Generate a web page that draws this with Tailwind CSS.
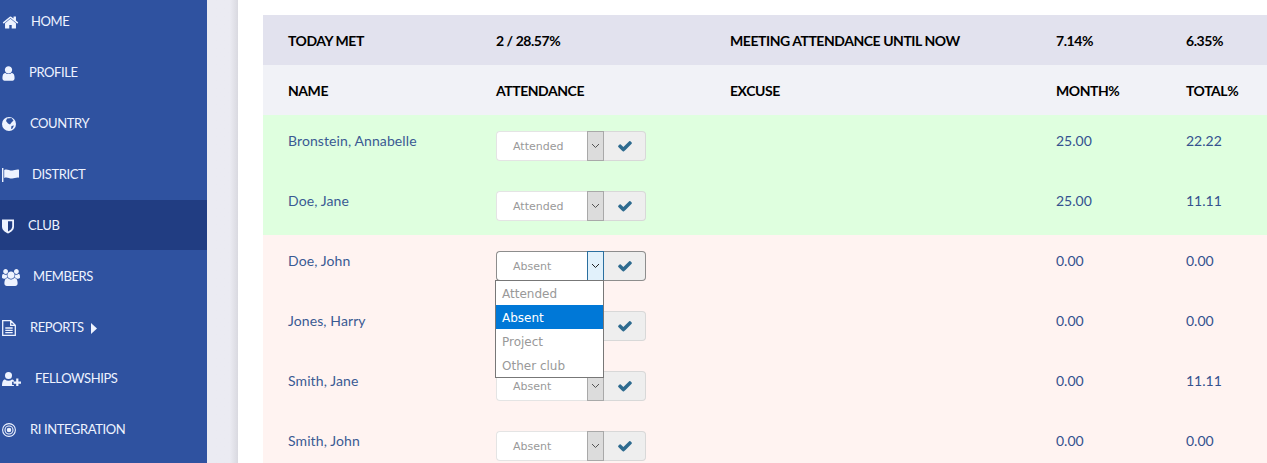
<!DOCTYPE html>
<html lang="en">
  <head>
    <meta charset="UTF-8" />
    <title>Club attendance</title>
    <script src="https://cdn.jsdelivr.net/npm/@tailwindcss/browser@4"></script>
  </head>
  <body class="h-[463px] w-[1267px] overflow-hidden flex bg-white font-['Lato','Liberation_Sans',sans-serif]">
    <!-- Sidebar -->
    <nav class="w-[207px] h-[463px] shrink-0 bg-[#2f52a0] text-[#eef3ff] text-[13px] tracking-[-0.4px] overflow-hidden">
      <ul class="flex flex-col gap-px -mt-[4px]">
        <li class="h-[50px] flex items-center pl-[2px] pt-[2px]">
          <svg class="w-[17px] h-[17px] fill-[#eef3ff]" viewBox="0 0 1792 1792"><path d="M1472 992v480q0 26-19 45t-45 19h-384v-384h-256v384h-384q-26 0-45-19t-19-45v-480q0-1 .5-3t.5-3l575-474 575 474q1 2 1 6zm223-69l-62 74q-8 9-21 11h-3q-13 0-21-7l-692-577-692 577q-12 8-24 7-13-2-21-11l-62-74q-8-10-7-23.5t11-21.5l719-599q32-26 76-26t76 26l244 204v-195q0-14 9-23t23-9h192q14 0 23 9t9 23v408l219 182q10 8 11 21.5t-7 23.5z"/></svg>
          <span class="ml-[12px]">HOME</span>
        </li>
        <li class="h-[50px] flex items-center pl-[0px] pt-[2px]">
          <svg class="w-[17px] h-[17px] fill-[#eef3ff]" viewBox="0 0 1792 1792"><path d="M1536 1399q0 109-62.5 187t-150.5 78h-854q-88 0-150.5-78t-62.5-187q0-85 8.5-160.5t31.5-152 58.5-131 94-89 134.5-34.5q131 128 313 128t313-128q76 0 134.5 34.5t94 89 58.5 131 31.5 152 8.5 160.5zm-256-887q0 159-112.5 271.5t-271.5 112.5-271.5-112.5-112.5-271.5 112.5-271.5 271.5-112.5 271.5 112.5 112.5 271.5z"/></svg>
          <span class="ml-[12px]">PROFILE</span>
        </li>
        <li class="h-[50px] flex items-center pl-[2px] pt-[2px]">
          <svg class="w-[14px] h-[14px]" viewBox="0 0 14 14"><circle cx="7" cy="7" r="7" fill="#eef3ff"/><path d="M5 1.500 9.500 1l2 2.500-2 2-1.500 2-2-1-2-2.500zM9.500 9l2.500-.5-1.500 3L9 12z" fill="#2f52a0"/></svg>
          <span class="ml-[14px]">COUNTRY</span>
        </li>
        <li class="h-[50px] flex items-center pl-[2px] pt-[2px]">
          <svg class="w-[17px] h-[14px] fill-[#eef3ff]" viewBox="0 0 17 14"><path d="M0 0h1.400v14H0zM2.200 2c3-1.500 5 .8 8 .6 2-.1 4-1.400 6.800-.9v8c-2.800-.4-4.800.8-6.800.9-3 .2-5-1.900-8-.6z"/></svg>
          <span class="ml-[13px]">DISTRICT</span>
        </li>
        <li class="h-[50px] flex items-center pl-[2px] pt-[2px] bg-[#213d82]">
          <svg class="w-[12px] h-[15px]" viewBox="0 0 12 14"><path d="M0 0h12v7c0 3.500-3 5.700-6 7-3-1.300-6-3.500-6-7z" fill="#eef3ff"/><path d="M6 1.800h4.200V7c0 2.300-2 3.900-4.200 5z" fill="#213d82"/></svg>
          <span class="ml-[14px]">CLUB</span>
        </li>
        <li class="h-[50px] flex items-center pl-[2px] pt-[2px]">
          <svg class="w-[18px] h-[17px] fill-[#eef3ff]" viewBox="0 0 1920 1792"><path d="M593 896q-162 5-265 128h-134q-82 0-138-40.500t-56-118.500q0-353 124-353 6 0 43.500 21t97.500 42.500 119 21.500q67 0 133-23-5 37-5 66 0 139 81 256zm1071 637q0 120-73 189.500t-194 69.500h-874q-121 0-194-69.500t-73-189.500q0-53 3.500-103.500t14-109 26.500-108.500 43-97.500 62-81 85.500-53.500 111.500-20q10 0 43 21.500t73 48 107 48 135 21.500 135-21.500 107-48 73-48 43-21.500q61 0 111.500 20t85.500 53.500 62 81 43 97.500 26.500 108.500 14 109 3.500 103.500zm-1024-1277q0 106-75 181t-181 75-181-75-75-181 75-181 181-75 181 75 75 181zm704 384q0 159-112.500 271.500t-271.500 112.500-271.500-112.500-112.500-271.500 112.500-271.500 271.500-112.500 271.500 112.500 112.500 271.500zm576 225q0 78-56 118.500t-138 40.500h-134q-103-123-265-128 81-117 81-256 0-29-5-66 66 23 133 23 59 0 119-21.500t97.500-42.500 43.500-21q124 0 124 353zm-128-609q0 106-75 181t-181 75-181-75-75-181 75-181 181-75 181 75 75 181z"/></svg>
          <span class="ml-[13px]">MEMBERS</span>
        </li>
        <li class="h-[50px] flex items-center pl-[2px] pt-[2px]">
          <svg class="w-[14px] h-[16px] fill-none stroke-[#eef3ff]" viewBox="0 0 14 16" stroke-width="1.300"><path d="M.7.700h8l4.600 4.600v10H.7zM8.700.700v4.600h4.600M3.300 8h7.400M3.300 10.300h7.400M3.300 12.600h7.400"/></svg>
          <span class="ml-[14px]">REPORTS</span>
          <svg class="w-[6px] h-[11px] ml-[7px] fill-[#eef3ff]" viewBox="0 0 6 11"><path d="M0 0l6 5.500L0 11z"/></svg>
        </li>
        <li class="h-[50px] flex items-center pl-[2px] pt-[2px]">
          <svg class="w-[19px] h-[14px] fill-[#eef3ff]" viewBox="0 0 19 14"><circle cx="6.500" cy="3.500" r="3.500"/><path d="M0 14c0-4 1-6.500 3-6.500 1 .8 2.200 1.200 3.500 1.200s2.500-.4 3.500-1.200c.8 0 1.400.4 1.900 1v1.300h-1.800v3.100h1.800V14z"/><path d="M14.200 6.500h2.200v3h2.600v2.200h-2.600V14h-2.200v-2.300h-2.600V9.500h2.600z"/></svg>
          <span class="ml-[14px]">FELLOWSHIPS</span>
        </li>
        <li class="h-[50px] flex items-center pl-[2px] pt-[2px]">
          <svg class="w-[14px] h-[14px] fill-none stroke-[#eef3ff]" viewBox="0 0 14 14" stroke-width="1.100"><circle cx="7" cy="7" r="6.400"/><circle cx="7" cy="7" r="4"/><circle cx="7" cy="7" r="1.700" fill="#eef3ff"/></svg>
          <span class="ml-[14px]">RI INTEGRATION</span>
        </li>
      </ul>
    </nav>

    <!-- Gutter -->
    <div class="w-[31px] h-[463px] shrink-0 bg-gradient-to-r from-[#ebebf2] from-[74%] to-[#d9d9e0]"></div>

    <!-- Content -->
    <main class="flex-1 min-w-0 pl-[25px] pt-[15px] overflow-hidden">
      <div class="relative">
        <table class="table-fixed w-[1004px] text-[14px] text-left">
          <colgroup>
            <col class="w-[233px]" />
            <col class="w-[234px]" />
            <col class="w-[326px]" />
            <col class="w-[130px]" />
            <col class="w-[81px]" />
          </colgroup>
          <thead class="text-black font-bold tracking-[-0.45px]">
            <tr class="h-[50px] bg-[#e2e2ee]">
              <th class="pl-[25px] font-bold">TODAY MET</th>
              <th class="font-bold">2 / 28.57%</th>
              <th class="font-bold">MEETING ATTENDANCE UNTIL NOW</th>
              <th class="font-bold">7.14%</th>
              <th class="font-bold">6.35%</th>
            </tr>
            <tr class="h-[50px] bg-[#f1f2f7]">
              <th class="pl-[25px] font-bold">NAME</th>
              <th class="font-bold">ATTENDANCE</th>
              <th class="font-bold">EXCUSE</th>
              <th class="font-bold">MONTH%</th>
              <th class="font-bold">TOTAL%</th>
            </tr>
          </thead>
          <tbody class="text-[#34518f]">
            <tr class="h-[60px] bg-[#dfffdf]">
              <td class="pl-[25px] pt-[15px] align-top text-[#3a5a93] tracking-[0.1px]">Bronstein, Annabelle</td>
              <td class="pt-[16px] align-top">
                <div class="flex w-[150px] h-[30px]">
                  <div class="flex-1 bg-white rounded-l-[4px] border border-[#e4e4e4] border-r-0 pl-[16px] pt-[3px] flex items-center text-[11px] text-[#999] font-['DejaVu_Sans',sans-serif]">Attended</div>
                  <div class="w-[17px] bg-[#dcdcdc] border border-[#a9a9a9] flex items-center justify-center"><svg class="w-[9px] h-[6px] fill-none stroke-[#555]" viewBox="0 0 9 6"><path d="M1 1l3.500 3.500L8 1"/></svg></div>
                  <div class="w-[42px] bg-[#eeeeee] rounded-r-[4px] border border-[#d8d8d8] border-l-0 flex items-center justify-center"><svg class="w-[16px] h-[16px] fill-[#2e6b8f]" viewBox="0 0 1792 1792"><path d="M1671 566q0 40-28 68l-724 724-136 136q-28 28-68 28t-68-28l-136-136-362-362q-28-28-28-68t28-68l136-136q28-28 68-28t68 28l294 295 656-657q28-28 68-28t68 28l136 136q28 28 28 68z"/></svg></div>
                </div>
              </td>
              <td></td>
              <td class="pt-[15px] align-top">25.00</td>
              <td class="pt-[15px] align-top">22.22</td>
            </tr>
            <tr class="h-[60px] bg-[#dfffdf]">
              <td class="pl-[25px] pt-[15px] align-top text-[#3a5a93] tracking-[0.1px]">Doe, Jane</td>
              <td class="pt-[16px] align-top">
                <div class="flex w-[150px] h-[30px]">
                  <div class="flex-1 bg-white rounded-l-[4px] border border-[#e4e4e4] border-r-0 pl-[16px] pt-[3px] flex items-center text-[11px] text-[#999] font-['DejaVu_Sans',sans-serif]">Attended</div>
                  <div class="w-[17px] bg-[#dcdcdc] border border-[#a9a9a9] flex items-center justify-center"><svg class="w-[9px] h-[6px] fill-none stroke-[#555]" viewBox="0 0 9 6"><path d="M1 1l3.500 3.500L8 1"/></svg></div>
                  <div class="w-[42px] bg-[#eeeeee] rounded-r-[4px] border border-[#d8d8d8] border-l-0 flex items-center justify-center"><svg class="w-[16px] h-[16px] fill-[#2e6b8f]" viewBox="0 0 1792 1792"><path d="M1671 566q0 40-28 68l-724 724-136 136q-28 28-68 28t-68-28l-136-136-362-362q-28-28-28-68t28-68l136-136q28-28 68-28t68 28l294 295 656-657q28-28 68-28t68 28l136 136q28 28 28 68z"/></svg></div>
                </div>
              </td>
              <td></td>
              <td class="pt-[15px] align-top">25.00</td>
              <td class="pt-[15px] align-top">11.11</td>
            </tr>
            <tr class="h-[60px] bg-[#fff3f1]">
              <td class="pl-[25px] pt-[15px] align-top text-[#3a5a93] tracking-[0.1px]">Doe, John</td>
              <td class="pt-[16px] align-top">
                <div class="flex w-[150px] h-[30px]">
                  <div class="flex-1 bg-white rounded-l-[4px] border border-[#8d8d8d] border-r-0 pl-[16px] pt-[3px] flex items-center text-[11px] text-[#999] font-['DejaVu_Sans',sans-serif]">Absent</div>
                  <div class="w-[17px] bg-[#e1f1fb] border border-[#2a6f9f] flex items-center justify-center"><svg class="w-[9px] h-[6px] fill-none stroke-[#222]" viewBox="0 0 9 6"><path d="M1 1l3.500 3.500L8 1"/></svg></div>
                  <div class="w-[42px] bg-[#eeeeee] rounded-r-[4px] border border-[#8d8d8d] border-l-0 flex items-center justify-center"><svg class="w-[16px] h-[16px] fill-[#2e6b8f]" viewBox="0 0 1792 1792"><path d="M1671 566q0 40-28 68l-724 724-136 136q-28 28-68 28t-68-28l-136-136-362-362q-28-28-28-68t28-68l136-136q28-28 68-28t68 28l294 295 656-657q28-28 68-28t68 28l136 136q28 28 28 68z"/></svg></div>
                </div>
              </td>
              <td></td>
              <td class="pt-[15px] align-top">0.00</td>
              <td class="pt-[15px] align-top">0.00</td>
            </tr>
            <tr class="h-[60px] bg-[#fff3f1]">
              <td class="pl-[25px] pt-[15px] align-top text-[#3a5a93] tracking-[0.1px]">Jones, Harry</td>
              <td class="pt-[16px] align-top">
                <div class="flex w-[150px] h-[30px]">
                  <div class="flex-1 bg-white rounded-l-[4px] border border-[#e4e4e4] border-r-0"></div>
                  <div class="w-[17px] bg-[#dcdcdc] border border-[#a9a9a9] flex items-center justify-center"><svg class="w-[9px] h-[6px] fill-none stroke-[#555]" viewBox="0 0 9 6"><path d="M1 1l3.500 3.500L8 1"/></svg></div>
                  <div class="w-[42px] bg-[#eeeeee] rounded-r-[4px] border border-[#d8d8d8] border-l-0 flex items-center justify-center"><svg class="w-[16px] h-[16px] fill-[#2e6b8f]" viewBox="0 0 1792 1792"><path d="M1671 566q0 40-28 68l-724 724-136 136q-28 28-68 28t-68-28l-136-136-362-362q-28-28-28-68t28-68l136-136q28-28 68-28t68 28l294 295 656-657q28-28 68-28t68 28l136 136q28 28 28 68z"/></svg></div>
                </div>
              </td>
              <td></td>
              <td class="pt-[15px] align-top">0.00</td>
              <td class="pt-[15px] align-top">0.00</td>
            </tr>
            <tr class="h-[60px] bg-[#fff3f1]">
              <td class="pl-[25px] pt-[15px] align-top text-[#3a5a93] tracking-[0.1px]">Smith, Jane</td>
              <td class="pt-[16px] align-top">
                <div class="flex w-[150px] h-[30px]">
                  <div class="flex-1 bg-white rounded-l-[4px] border border-[#e4e4e4] border-r-0 pl-[16px] pt-[3px] flex items-center text-[11px] text-[#999] font-['DejaVu_Sans',sans-serif]">Absent</div>
                  <div class="w-[17px] bg-[#dcdcdc] border border-[#a9a9a9] flex items-center justify-center"><svg class="w-[9px] h-[6px] fill-none stroke-[#555]" viewBox="0 0 9 6"><path d="M1 1l3.500 3.500L8 1"/></svg></div>
                  <div class="w-[42px] bg-[#eeeeee] rounded-r-[4px] border border-[#d8d8d8] border-l-0 flex items-center justify-center"><svg class="w-[16px] h-[16px] fill-[#2e6b8f]" viewBox="0 0 1792 1792"><path d="M1671 566q0 40-28 68l-724 724-136 136q-28 28-68 28t-68-28l-136-136-362-362q-28-28-28-68t28-68l136-136q28-28 68-28t68 28l294 295 656-657q28-28 68-28t68 28l136 136q28 28 28 68z"/></svg></div>
                </div>
              </td>
              <td></td>
              <td class="pt-[15px] align-top">0.00</td>
              <td class="pt-[15px] align-top">11.11</td>
            </tr>
            <tr class="h-[60px] bg-[#fff3f1]">
              <td class="pl-[25px] pt-[15px] align-top text-[#3a5a93] tracking-[0.1px]">Smith, John</td>
              <td class="pt-[16px] align-top">
                <div class="flex w-[150px] h-[30px]">
                  <div class="flex-1 bg-white rounded-l-[4px] border border-[#e4e4e4] border-r-0 pl-[16px] pt-[3px] flex items-center text-[11px] text-[#999] font-['DejaVu_Sans',sans-serif]">Absent</div>
                  <div class="w-[17px] bg-[#dcdcdc] border border-[#a9a9a9] flex items-center justify-center"><svg class="w-[9px] h-[6px] fill-none stroke-[#555]" viewBox="0 0 9 6"><path d="M1 1l3.500 3.500L8 1"/></svg></div>
                  <div class="w-[42px] bg-[#eeeeee] rounded-r-[4px] border border-[#d8d8d8] border-l-0 flex items-center justify-center"><svg class="w-[16px] h-[16px] fill-[#2e6b8f]" viewBox="0 0 1792 1792"><path d="M1671 566q0 40-28 68l-724 724-136 136q-28 28-68 28t-68-28l-136-136-362-362q-28-28-28-68t28-68l136-136q28-28 68-28t68 28l294 295 656-657q28-28 68-28t68 28l136 136q28 28 28 68z"/></svg></div>
                </div>
              </td>
              <td></td>
              <td class="pt-[15px] align-top">0.00</td>
              <td class="pt-[15px] align-top">0.00</td>
            </tr>
          </tbody>
        </table>

        <!-- Open select dropdown -->
        <ul class="absolute left-[232px] top-[265px] w-[109px] bg-white border border-[#777] text-[12px] text-[#999] font-['DejaVu_Sans',sans-serif]">
          <li class="h-[24px] pl-[6px] pt-[2px] flex items-center">Attended</li>
          <li class="h-[24px] pl-[6px] pt-[2px] flex items-center bg-[#0078d7] text-white">Absent</li>
          <li class="h-[24px] pl-[6px] pt-[2px] flex items-center">Project</li>
          <li class="h-[24px] pl-[6px] pt-[2px] flex items-center">Other club</li>
        </ul>
      </div>
    </main>
  </body>
</html>
